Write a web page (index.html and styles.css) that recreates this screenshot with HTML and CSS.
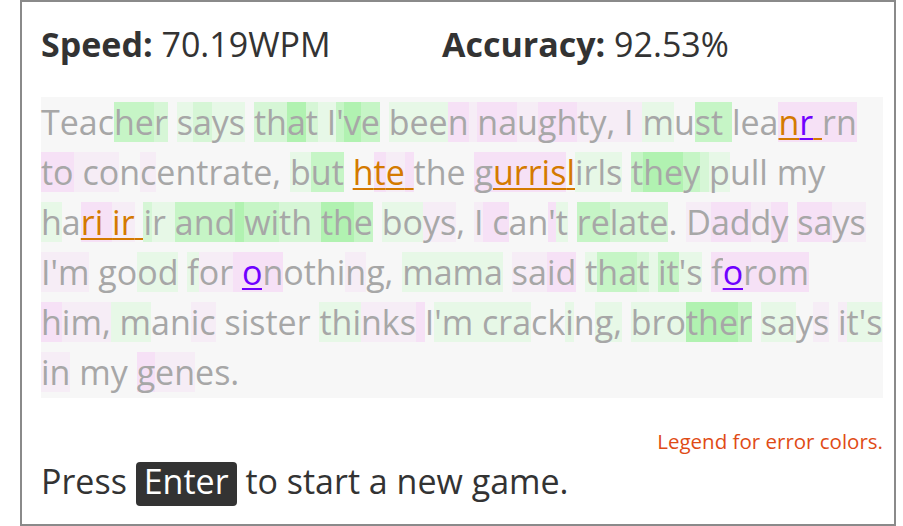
FILE: index.html
```html
<!DOCTYPE html>
<html lang="en">
<head>
<meta charset="utf-8">
<title>Typing game</title>
<link rel="stylesheet" href="styles.css">
</head>
<body>
<main class="box">
  <header class="stats">
    <div class="stat stat-speed"><strong>Speed:</strong> 70.19WPM</div>
    <div class="stat"><strong>Accuracy:</strong> 92.53%</div>
  </header>

  <p class="typed">Teac<span class="c">he</span><span class="b">r</span> <span class="a">s</span><span class="b">a</span><span class="a">ys</span> <span class="b">th</span><span class="d">a</span><span class="b">t</span><span class="a"> I</span><span class="c">'</span><span class="d">v</span><span class="c">e</span> <span class="a">bee</span><span class="q">n</span><span class="p"> </span><span class="q">na</span><span class="p">u</span><span class="q">gh</span><span class="p">ty, I </span><span class="a">m</span>u<span class="c">st </span>lea<span class="eo q">n</span><span class="ep q">r</span><span class="eo q"> </span><span class="q">rn</span> <span class="q">to</span><span class="p"> co</span>n<span class="p">c</span>entrate, <span class="a">b</span><span class="c">ut</span> <span class="eo">h</span><span class="eo q">t</span><span class="eo p">e</span><span class="eo q"> </span>the <span class="q">g</span><span class="eo q">urris</span><span class="eo">l</span><span class="a">irls</span> <span class="c">t</span><span class="d">he</span><span class="c">y</span><span class="b"> </span><span class="a">p</span>ull my <span class="a">h</span>a<span class="eo q">ri </span><span class="eo p">ir</span><span class="eo"> </span><span class="b">i</span><span class="a">r </span><span class="c">and</span><span class="d"> </span><span class="c">wi</span><span class="b">th </span><span class="d">th</span><span class="c">e</span> <span class="a">bo</span><span class="p">ys</span>, <span class="p">I</span><span class="q"> c</span>an<span class="q">'</span><span class="a">t</span> <span class="c">re</span><span class="b">late</span>. <span class="p">D</span><span class="q">ad</span><span class="p">d</span><span class="q">y</span> <span class="q">sa</span><span class="p">ys</span> <span class="p">I'm</span> go<span class="a">od</span> <span class="a">f</span><span class="p">or</span><span class="q"> </span><span class="ep q">o</span><span class="q">n</span>othi<span class="p">n</span>g, <span class="a">mama</span> <span class="p">sa</span><span class="q">id</span> <span class="a">t</span><span class="c">ha</span><span class="b">t</span><span class="a"> </span><span class="c">it</span><span class="a">'s</span> <span class="q">f</span><span class="ep q">o</span><span class="q">rom</span> <span class="q">h</span><span class="p">im,</span><span class="a"> m</span>an<span class="p">ic</span> sister <span class="a">thi</span><span class="p">nks</span><span class="q"> </span>I<span class="a">'m </span><span class="a">cra</span>ck<span class="a">i</span>n<span class="a">g,</span> <span class="a">bro</span><span class="d">the</span><span class="c">r</span> <span class="a">sa</span>y<span class="p">s</span> <span class="p">i</span><span class="a">t's</span> <span class="p">in</span> my <span class="q">g</span><span class="p">en</span>es.</p>

  <p class="legend">Legend for error colors.</p>

  <p class="prompt">Press <kbd class="key">Enter</kbd> to start a new game.</p>
</main>
</body>
</html>
```

FILE: styles.css
```css
* {
  box-sizing: border-box;
}

html,
body {
  margin: 0;
  background: #ffffff;
}

.box {
  width: 876px;
  height: 526px;
  margin-left: 20px;
  border: 2px solid #8a8a8a;
  padding: 19px 11px 0 19px;
  font-family: "Open Sans", "Noto Sans", sans-serif;
  color: #333333;
  overflow: hidden;
}

.stats {
  display: flex;
  font-size: 34px;
  line-height: 46px;
  margin: 0;
}

.stat-speed {
  width: 401px;
}

.stat strong {
  font-weight: 700;
}

.typed {
  margin: 30px 0 0;
  font-size: 34px;
  line-height: 50px;
  color: #a7a7a7;
  background: #f7f7f7;
  padding-bottom: 1px;
}

.typed span {
  background-repeat: no-repeat;
  background-position: 0 50%;
  background-size: 100% 40px;
}

.a { background-image: linear-gradient(#e7f8e7, #e7f8e7); }
.b { background-image: linear-gradient(#d6f6d6, #d6f6d6); }
.c { background-image: linear-gradient(#c6f5c6, #c6f5c6); }
.d { background-image: linear-gradient(#b1f2b1, #b1f2b1); }
.p { background-image: linear-gradient(#f6edf6, #f6edf6); }
.q { background-image: linear-gradient(#f6e1f6, #f6e1f6); }

.eo,
.ep {
  text-decoration: underline;
  text-decoration-thickness: 2px;
  text-underline-offset: 3px;
}

.eo { color: #d47a00; }
.ep { color: #7000ff; }

.legend {
  margin: 29px 0 0;
  text-align: right;
  font-size: 20.5px;
  line-height: 28px;
  color: #df4b16;
}

.prompt {
  margin: 3px 0 0;
  font-size: 34px;
  line-height: 46px;
  color: #333333;
}

.key {
  display: inline-block;
  font-family: inherit;
  font-size: 34px;
  line-height: 38px;
  padding: 0 8px 6px;
  background: #333333;
  color: #ffffff;
  border-radius: 4px;
}
```
